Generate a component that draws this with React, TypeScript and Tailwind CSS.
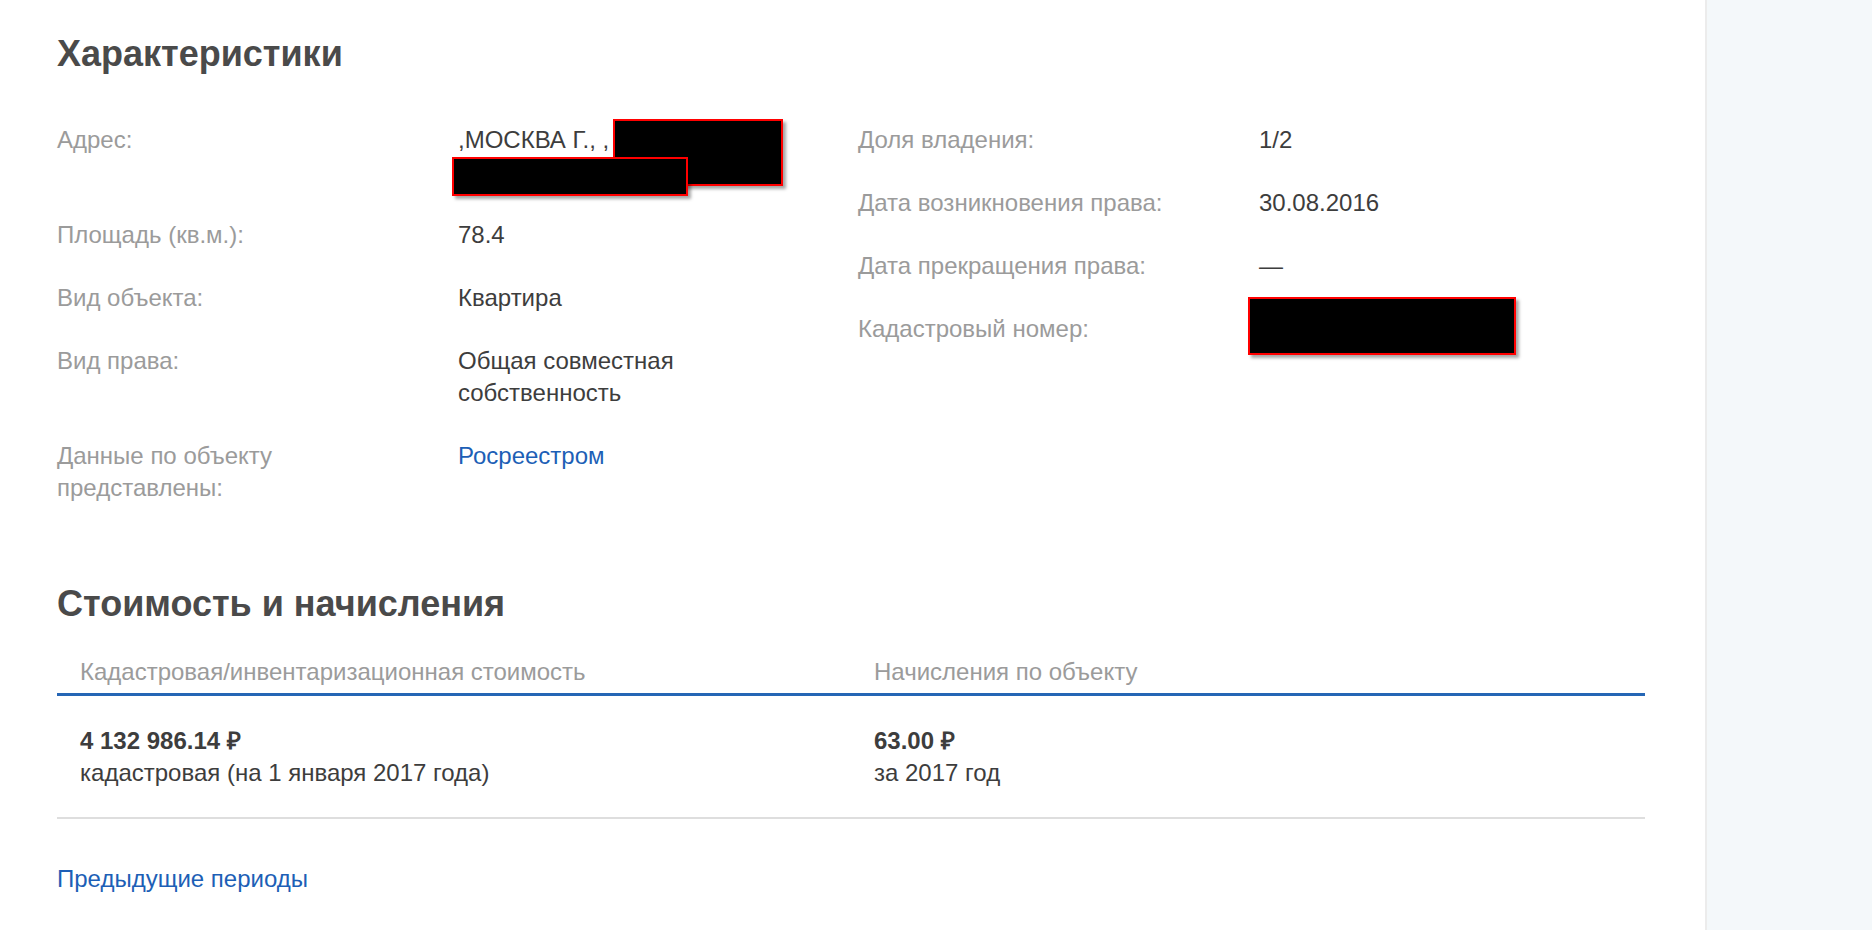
import React from "react";

// Redaction overlay: black box with red border and a soft shadow
function Redact({ className }: { className: string }) {
  return (
    <span
      className={`absolute bg-black border-2 border-[#ff0000] shadow-[3px_3px_3px_rgba(0,0,0,0.35)] ${className}`}
    />
  );
}

interface RowProps {
  label: React.ReactNode;
  children: React.ReactNode;
}

function Row({ label, children }: RowProps) {
  return (
    <div className="flex mb-[31px]">
      <div className="w-[401px] shrink-0 pr-[40px] text-[#9b9b9b]">{label}</div>
      <div className="flex-1 pr-[40px] text-[#3d3d3d]">{children}</div>
    </div>
  );
}

export default function App() {
  return (
    <div className="flex min-h-[930px] w-full font-['Liberation_Sans',Arial,sans-serif] text-[24px] leading-[32px] bg-white">
      <main className="w-[1705px] shrink-0 pl-[57px] pr-[60px] pt-[32px]">
        <h2 className="text-[36px] leading-[44px] font-bold text-[#4a4a4a]">
          Характеристики
        </h2>

        <div className="flex mt-[48px]">
          <div className="w-[801px] shrink-0">
            <Row label="Адрес:">
              <div className="relative">
                ,МОСКВА Г., ,
                <br />
                &nbsp;
                <Redact className="left-[155px] top-[-5px] w-[170px] h-[67px]" />
                <Redact className="left-[-6px] top-[33px] w-[236px] h-[39px]" />
              </div>
            </Row>
            <Row label="Площадь (кв.м.):">78.4</Row>
            <Row label="Вид объекта:">Квартира</Row>
            <Row label="Вид права:">Общая совместная собственность</Row>
            <Row label="Данные по объекту представлены:">
              <a href="#" className="text-[#1d5fb6]">
                Росреестром
              </a>
            </Row>
          </div>

          <div className="flex-1">
            <Row label="Доля владения:">1/2</Row>
            <Row label="Дата возникновения права:">30.08.2016</Row>
            <Row label="Дата прекращения права:">—</Row>
            <Row label="Кадастровый номер:">
              <div className="relative">
                &nbsp;
                <Redact className="left-[-11px] top-[-16px] w-[268px] h-[58px]" />
              </div>
            </Row>
          </div>
        </div>

        <h2 className="mt-[47px] text-[36px] leading-[44px] font-bold text-[#4a4a4a]">
          Стоимость и начисления
        </h2>

        <div className="mt-[30px] w-[1588px]">
          <div className="grid grid-cols-2 border-b-[3px] border-[#2566b5] pb-[5px] text-[#9b9b9b]">
            <div className="pl-[23px]">Кадастровая/инвентаризационная стоимость</div>
            <div className="pl-[23px]">Начисления по объекту</div>
          </div>
          <div className="grid grid-cols-2 border-b-2 border-[#dedede] pt-[29px] pb-[28px] text-[#3d3d3d]">
            <div className="pl-[23px]">
              <div className="font-bold">4 132 986.14 ₽</div>
              <div>кадастровая (на 1 января 2017 года)</div>
            </div>
            <div className="pl-[23px]">
              <div className="font-bold">63.00 ₽</div>
              <div>за 2017 год</div>
            </div>
          </div>
        </div>

        <div className="mt-[44px]">
          <a href="#" className="text-[#1d5fb6]">
            Предыдущие периоды
          </a>
        </div>
      </main>

      <aside className="flex-1 border-l-2 border-[#ececec] bg-[#f4f8fa]" />
    </div>
  );
}
